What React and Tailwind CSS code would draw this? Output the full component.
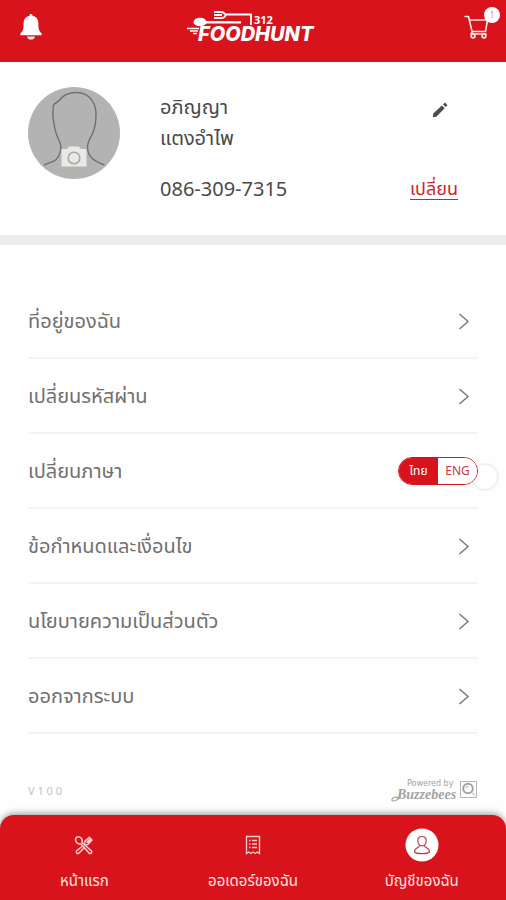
import React, { useState } from 'react';

const menuItems = [
  'ที่อยู่ของฉัน',
  'เปลี่ยนรหัสผ่าน',
  'เปลี่ยนภาษา',
  'ข้อกำหนดและเงื่อนไข',
  'นโยบายความเป็นส่วนตัว',
  'ออกจากระบบ',
];

const BellIcon = () => (
  <svg viewBox="0 0 22 26" className="w-[22px] h-[26px]" fill="#fff" aria-hidden="true">
    <path d="M11 0c1 0 1.500.7 1.500 1.700C16.500 2.600 18.400 5.500 18.400 9.500c0 5 .4 7.500 3.200 10v1.700H.400v-1.700C3.200 17 3.600 14.500 3.600 9.500c0-4 1.900-6.900 5.900-7.800C9.500.7 10 0 11 0z" />
    <path d="M7 22.400h8c-.3 2-1.800 3.200-4 3.200s-3.700-1.200-4-3.200z" opacity=".9" />
  </svg>
);

const Logo = () => (
  <svg viewBox="0 0 136 42" className="w-[136px] h-[42px] shrink-0" fill="none" stroke="#fff" role="img" aria-label="1312 FOODHUNT">
    <path d="M29 6h7c3 0 3.500 1.500 4.500 2.500H66V19M29 9h8M29 12h7c3 0 4-1 4.500-2.500" strokeWidth="1.800" />
    <ellipse cx="15" cy="16" rx="6.500" ry="4.300" fill="#fff" stroke="none" />
    <path d="M20 15l36 .2v2.300L20 17.500z" fill="#fff" stroke="none" />
    <path d="M2 22.500h12M5 25h8M8 27.500h4" strokeWidth="1.400" />
    <text x="69" y="18" fontSize="11" fontWeight="700" fill="#fff" stroke="none" className="font-['Open_Sans',sans-serif]">312</text>
    <text x="13" y="35" fontSize="20" fontWeight="800" fontStyle="italic" fill="#fff" stroke="none" className="font-['Inter',sans-serif]">FOODHUNT</text>
  </svg>
);

const CartIcon = () => (
  <svg viewBox="0 0 26 24" className="w-[26px] h-6" fill="none" stroke="#ffe9e7" strokeWidth="1.600" strokeLinecap="round" strokeLinejoin="round" aria-hidden="true">
    <path d="M1 1.500h3.500L8 16.500h13.500L23.500 5H5.500M8.500 16.500l-1.500 2.500h15" />
    <circle cx="9" cy="21" r="1.900" />
    <circle cx="20" cy="21" r="1.900" />
  </svg>
);

const Avatar = () => (
  <svg viewBox="0 0 92 92" className="w-[92px] h-[92px] shrink-0" role="img" aria-label="รูปโปรไฟล์">
    <circle cx="46" cy="46" r="46" fill="#b3b3b3" />
    <path d="M16 78c8-3 12-4 14-8 3-5 3.500-8 2.500-13-3-7-6-12-6.500-21-2-7-1-13-.5-18 2-3 4-2 6-5C35 8.500 40 5.500 48 5.500c12 0 19 8 20 20 .2 8-1 15-3 20-3 7-6 9-5.500 16 1 9 7 13 17 16.500" fill="none" stroke="#707070" strokeWidth="1.400" />
    <path d="M33.500 62H39l2-2.500h10l2 2.500h5.500v17.500h-25z" fill="#e9e8e4" />
    <circle cx="46" cy="71" r="5.800" fill="none" stroke="#aaa9a5" strokeWidth="1.600" />
  </svg>
);

const PencilIcon = () => (
  <svg viewBox="0 0 16 16" className="w-4 h-4" fill="#4b4b4b" aria-hidden="true">
    <path d="M.800 15.200l.5-3.600L9.900 3.400l2.800 2.800-8.400 8.500zM11 2.400l1.400-1.400c.3-.3.700-.3 1 0l1.700 1.700c.3.300.3.700 0 1l-1.400 1.400z" />
  </svg>
);

const Chevron = () => (
  <svg viewBox="0 0 12 18" className="w-3 h-[18px]" fill="none" stroke="#777" strokeWidth="1.400" aria-hidden="true">
    <path d="M1.500 2L10 9.500l-8.500 7.500" />
  </svg>
);

const HomeIcon = () => (
  <svg viewBox="0 0 20 20" className="w-5 h-5" fill="none" stroke="#ffd0cd" strokeWidth="1.500" strokeLinejoin="round" aria-hidden="true">
    <path d="M8 7.500l9.500 8.500c.8 1.500-.5 3-2 2.500L7 9C4.500 9.500 1.500 7.500 1.500 4.500c0-2.500 3-3.500 5-2C8.200 3.800 8.800 5.500 8 7.500z" />
    <path d="M11.500 10l2.500-.8 4.500-4.700M10.500 8.800l.6-2.800 4.900-4.200M12.500 7.500l4.500-4.500M14 8l4-4M8.500 11L2.500 16c-.8 1.500.5 3 2 2.500L10.500 12.500" />
  </svg>
);

const OrdersIcon = () => (
  <svg viewBox="0 0 20 20" className="w-5 h-5" fill="none" stroke="#ffd0cd" strokeWidth="1.300" aria-hidden="true">
    <path d="M3.500 1.500h13v17l-2.200-1.500-2.100 1.500-2.200-1.500-2.200 1.500-2.100-1.500-2.200 1.500z" />
    <path d="M6 5.500h1.500M9 5.500h5M6 9h1.500M9 9h5M6 12.500h1.500M9 12.500h5" />
  </svg>
);

const AccountIcon = () => (
  <svg viewBox="0 0 34 34" className="w-[34px] h-[34px]" fill="none" stroke="#b9404a" strokeWidth="1.200" aria-hidden="true">
    <circle cx="17" cy="17" r="16.500" fill="#fff" stroke="none" />
    <path d="M17 8.500c2.700 0 4.200 1.800 4.200 4.300 0 2.700-1.800 5-4.200 5s-4.200-2.300-4.200-5c0-2.500 1.500-4.300 4.200-4.300zM14.500 17.500c.3 2.500-5 1.500-5 6.500 2 2.200 13 2.200 15 0 0-5-5.300-4-5-6.500" />
  </svg>
);

const BuzzebeesLogo = () => (
  <svg viewBox="0 0 88 26" className="w-[88px] h-[26px]" role="img" aria-label="Powered by Buzzebees">
    <text x="17" y="8" fontSize="8" fill="#a3a3a3" className="font-['DejaVu_Sans',sans-serif]">Powered by</text>
    <text x="7" y="21" fontSize="14" fontWeight="700" fontStyle="italic" fill="#a3a3a3" className="font-['Liberation_Serif',serif]">Buzzebees</text>
    <path d="M9 20c-3-2-8 0-7 2.500 2 1.500 7-1 9-5" fill="none" stroke="#a3a3a3" strokeWidth="1.200" />
    <g fill="none" stroke="#a3a3a3">
      <path d="M70.500 3.500h16v16h-16z" strokeWidth=".8" />
      <circle cx="78" cy="10.500" r="4.800" strokeWidth="2" />
      <path d="M76 10a2 2 0 0 1 2-1.800M82 14.500l3 3" />
    </g>
  </svg>
);

const LanguageToggle = () => {
  const [lang, setLang] = useState('th');
  const active = 'bg-[#d8131b] text-white';
  const idle = 'bg-white text-[#c23a42]';

  return (
    <div className="relative">
      <span className="absolute left-[73px] top-1.5 w-7 h-7 rounded-full border-2 border-[#f1f1f1]" />
      <div className="relative flex w-20 h-7 rounded-full overflow-hidden border border-[#d8131b] text-[12px]">
        <button type="button" aria-pressed={lang === 'th'} onClick={() => setLang('th')} className={`flex-1 ${lang === 'th' ? active : idle}`}>
          ไทย
        </button>
        <button type="button" aria-pressed={lang === 'en'} onClick={() => setLang('en')} className={`flex-1 ${lang === 'en' ? active : idle}`}>
          ENG
        </button>
      </div>
    </div>
  );
};

const App = () => {
  return (
    <div className="min-h-screen flex flex-col bg-[#fefefe] overflow-x-hidden font-['Noto_Sans','Noto_Sans_Thai',sans-serif]">
      <header className="h-[62px] pb-2 grid grid-cols-3 items-center bg-[#d8131b]">
        <button type="button" aria-label="การแจ้งเตือน" className="ml-5 w-10">
          <BellIcon />
        </button>
        <div className="flex justify-center">
          <Logo />
        </div>
        <button type="button" aria-label="ตะกร้า" className="relative w-[42px] justify-self-end">
          <CartIcon />
          <span className="absolute left-5 -top-2 w-4 h-4 rounded-full bg-white text-[#d88] text-[8px] flex items-center justify-center">1</span>
        </button>
      </header>

      <section className="h-[183px] px-7 pt-[25px] flex items-start border-b-[10px] border-[#ececec] text-[#4a4a4a]">
        <Avatar />
        <div className="ml-10 flex-1 text-[20px] leading-[31px]">
          <div className="flex justify-between">
            <p className="mt-1">
              อภิญญา
              <br />
              แตงอำไพ
            </p>
            <button type="button" aria-label="แก้ไข" className="self-start mt-[15px] mr-[30px]">
              <PencilIcon />
            </button>
          </div>
          <div className="mt-5 mr-5 flex justify-between">
            <p>086-309-7315</p>
            <a href="#phone" className="text-[18px] text-[#c9252d] underline underline-offset-4 decoration-1">เปลี่ยน</a>
          </div>
        </div>
      </section>

      <ul className="px-7 pt-[39px]">
        {menuItems.map((item) => (
          <li key={item} className="h-[75px] flex items-center border-b-2 border-[#f4f4f4] text-[20px] text-[#707070]">
            {item === 'เปลี่ยนภาษา' ? (
              <div className="flex-1 flex items-center justify-between">
                <span>{item}</span>
                <LanguageToggle />
              </div>
            ) : (
              <a href="#menu" className="flex-1 flex items-center justify-between pr-2">
                <span>{item}</span>
                <Chevron />
              </a>
            )}
          </li>
        ))}
      </ul>

      <div className="mt-auto px-7 pb-[11px] flex items-center justify-between">
        <p className="text-[11px] text-[#c4c4c4]">V 1 0 0</p>
        <BuzzebeesLogo />
      </div>

      <nav className="h-[85px] grid grid-cols-3 rounded-t-[14px] bg-[#d8131b] text-[15px] text-[#ffe3e0] shadow-[0_-2px_6px_rgba(0,0,0,0.35)]">
        <a href="#home" className="flex flex-col items-center pt-3">
          <span className="h-9 flex items-center"><HomeIcon /></span>
          <span className="mt-1.5">หน้าแรก</span>
        </a>
        <a href="#orders" className="flex flex-col items-center pt-3">
          <span className="h-9 flex items-center"><OrdersIcon /></span>
          <span className="mt-1.5">ออเดอร์ของฉัน</span>
        </a>
        <a href="#account" aria-current="page" className="flex flex-col items-center pt-3">
          <span className="h-9 flex items-center"><AccountIcon /></span>
          <span className="mt-1.5">บัญชีของฉัน</span>
        </a>
      </nav>
    </div>
  );
};

export default App;
